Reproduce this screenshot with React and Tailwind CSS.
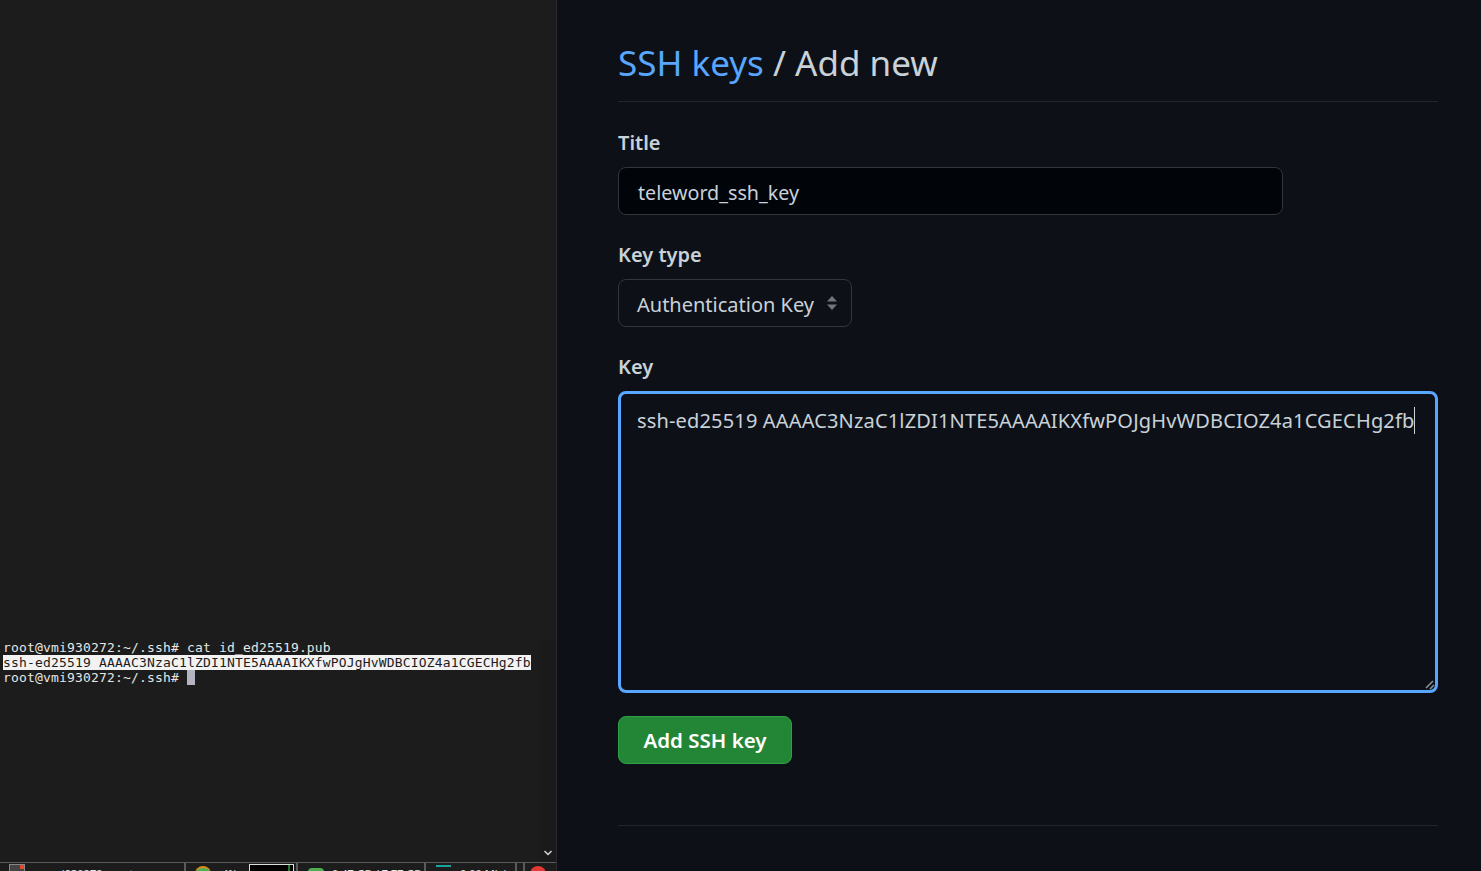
import { ChevronDown } from 'lucide-react'

const UI_FONT = "font-['Noto_Sans',sans-serif]"

function Terminal() {
  return (
    <aside className="w-[557px] shrink-0 h-full flex flex-col bg-[#1c1c1c] border-r border-[#2a2a2a]">
      <div className="flex-1 flex min-h-0">
        <div className="flex-1 pt-[640px] pl-[3px] font-['DejaVu_Sans_Mono',monospace] text-[13px] leading-[15px] tracking-[0.17px] text-[#e6e6e6] whitespace-pre">
          <div>root@vmi930272:~/.ssh# cat id_ed25519.pub</div>
          <div className="w-[528px] bg-[#f2f2f2] text-[#1c1c1c]">ssh-ed25519 AAAAC3NzaC1lZDI1NTE5AAAAIKXfwPOJgHvWDBCIOZ4a1CGECHg2fb</div>
          <div className="flex">
            <span>root@vmi930272:~/.ssh# </span>
            <span className="w-2 h-[15px] bg-[#b4b4c0]" />
          </div>
        </div>
        <div className="w-4 mt-[640px] flex flex-col justify-end items-center bg-[#1a1a1a]">
          <ChevronDown className="w-3 h-3 text-[#c8c8c8] mb-[3px]" strokeWidth={3.5} />
        </div>
      </div>
      <StatusBar />
    </aside>
  )
}

// clipped by the bottom of the window, only the top few pixels show
function StatusBar() {
  return (
    <div className="h-[9px] shrink-0 border-t border-[#5a5a5a] flex overflow-hidden font-['Noto_Sans',sans-serif] text-[11px] leading-none text-[#e6e6e6] whitespace-nowrap">
      <div className="w-[186px] flex items-start pl-[9px] pt-px border-r-2 border-[#5a5a5a]">
        <span className="relative w-4 h-3 border border-[#888] bg-[#444]">
          <span className="absolute top-0 right-0 w-1 h-1 bg-[#e0492e]" />
        </span>
        <span className="ml-[21px] mt-[4px]">vmi930272 - root</span>
      </div>
      <div className="w-[112px] flex items-start pl-[9px] pt-[3px] border-r-2 border-[#5a5a5a]">
        <span className="w-4 h-3 rounded-t-full bg-[#4caf50] border-t-2 border-[#e08a1e]" />
        <span className="ml-[11px] mt-[2px] w-[27px]">4%</span>
        <span className="flex justify-end w-[45px] h-3 -mt-[2px] bg-black border border-[#ddd]">
          <span className="w-[2px] mr-[3px] bg-[#1f7a2e]" />
        </span>
      </div>
      <div className="w-[128px] flex items-start pl-[10px] pt-[5px] border-r-2 border-[#5a5a5a]">
        <span className="w-4 h-3 rounded-t-sm bg-[#4caf50]" />
        <span className="ml-2">0.47 GB / 7.77 GB</span>
      </div>
      <div className="w-[91px] flex items-start pl-[10px] pt-[2px] border-r-2 border-[#5a5a5a]">
        <span className="w-[15px] h-[2px] bg-[#1aa39a]" />
        <span className="ml-[9px] mt-[3px]">0.00 Mb/s</span>
      </div>
      <div className="w-2 border-r-2 border-[#5a5a5a]" />
      <div className="flex-1 flex items-start pl-[5px] pt-[3px]">
        <span className="w-4 h-4 rounded-full bg-[#e53935]" />
      </div>
    </div>
  )
}

function Label({ children }) {
  return <div className="text-[#c9d1d9] font-semibold text-[20px] leading-[30px]">{children}</div>
}

export default function App() {
  return (
    <div className={`h-[871px] overflow-hidden flex bg-[#0d1117] ${UI_FONT}`}>
      <Terminal />
      <main className="flex-1 min-w-0 pl-[61px] pr-[43px] text-[#c9d1d9]">
        <h1 className="pt-[36px] pb-[8px] h-[102px] border-b border-[#21262d] text-[35px] leading-[54px]">
          <span className="text-[#58a6ff]">SSH keys</span> / Add new
        </h1>

        <div className="mt-[26px]">
          <Label>Title</Label>
          <div className="mt-[9px] w-[665px] h-12 rounded-lg border border-[#30363d] bg-[#010409] pl-[19px] pt-[3px] flex items-center text-[19.7px]">
            teleword_ssh_key
          </div>
        </div>

        <div className="mt-[25px]">
          <Label>Key type</Label>
          <div className="mt-[9px] w-[234px] h-12 rounded-lg border border-[#30363d] pl-[18px] pr-[13px] flex items-center justify-between text-[20px]">
            <span className="pt-[3px]">Authentication Key</span>
            <svg viewBox="0 0 12 16" className="w-3 h-4 fill-[#6e7681]">
              <path d="M6 1l5 5.5H1zM6 15l5-5.5H1z" />
            </svg>
          </div>
        </div>

        <div className="mt-[25px]">
          <Label>Key</Label>
          <div className="relative mt-[9px] h-[302px] rounded-lg border-[3px] border-[#58a6ff] pl-[16px] pt-[11px] text-[20px] tracking-[0.16px] leading-[32px] whitespace-nowrap">
            <span className="border-r border-[#c9d1d9]">ssh-ed25519 AAAAC3NzaC1lZDI1NTE5AAAAIKXfwPOJgHvWDBCIOZ4a1CGECHg2fb</span>
            <svg viewBox="0 0 10 10" className="absolute right-0 bottom-0 w-2.5 h-2.5 stroke-[#8b949e]" strokeWidth="1.5">
              <path d="M1 8l7-7M5 9l4-4" />
            </svg>
          </div>
        </div>

        <button className="mt-[23px] w-[174px] h-12 pt-[1px] rounded-lg bg-[#238636] border border-[#2ea043] text-white font-semibold text-[20.5px]">
          Add SSH key
        </button>

        <div className="mt-[61px] border-t border-[#21262d]" />
      </main>
    </div>
  )
}
